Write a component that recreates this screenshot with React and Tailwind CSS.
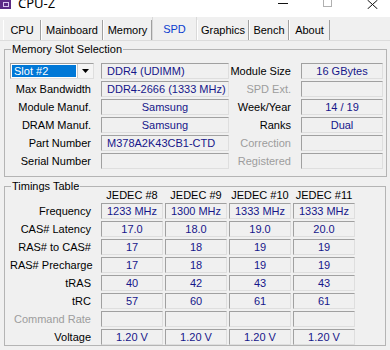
import React from "react";

const Box = ({ children, className = "" }) => (
    <div className={`h-4 flex items-center justify-center border border-t-[#a0a0a0] border-l-[#a0a0a0] border-b-[#dedede] border-r-[#dedede] text-[#16168a] leading-none whitespace-nowrap ${className}`}>
        {children}
    </div>
);

const Label = ({ children, dim, className = "" }) => (
    <div className={`text-right whitespace-nowrap leading-none ${dim ? "text-[#9d9d9d]" : "text-black"} ${className}`}>
        {children}
    </div>
);

const slotRows = [
    { label: "Max Bandwidth", value: "DDR4-2666 (1333 MHz)", left: true, rlabel: "SPD Ext.", rdim: true, rvalue: "" },
    { label: "Module Manuf.", value: "Samsung", rlabel: "Week/Year", rvalue: "14 / 19" },
    { label: "DRAM Manuf.", value: "Samsung", rlabel: "Ranks", rvalue: "Dual" },
    { label: "Part Number", value: "M378A2K43CB1-CTD", left: true, rlabel: "Correction", rdim: true, rvalue: "" },
    { label: "Serial Number", value: "", rlabel: "Registered", rdim: true, rvalue: "" },
];

const timings = [
    { label: "Frequency", values: ["1233 MHz", "1300 MHz", "1333 MHz", "1333 MHz"] },
    { label: "CAS# Latency", values: ["17.0", "18.0", "19.0", "20.0"] },
    { label: "RAS# to CAS#", values: ["17", "18", "19", "19"] },
    { label: "RAS# Precharge", values: ["17", "18", "19", "19"] },
    { label: "tRAS", values: ["40", "42", "43", "43"] },
    { label: "tRC", values: ["57", "60", "61", "61"] },
    { label: "Command Rate", dim: true, values: ["", "", "", ""] },
    { label: "Voltage", values: ["1.20 V", "1.20 V", "1.20 V", "1.20 V"] },
];

const tabs = [
    { name: "CPU", w: "w-[38px]" },
    { name: "Mainboard", w: "w-[62px]" },
    { name: "Memory", w: "w-[49px]" },
    { name: "SPD", w: "w-[45px]", active: true },
    { name: "Graphics", w: "w-[52px]" },
    { name: "Bench", w: "w-[40px]" },
    { name: "About", w: "w-[41px]" },
];

const App = () => {
    return (
        <div className="w-[390px] h-[350px] overflow-hidden bg-[#f0f0f0] text-[11px] font-['Liberation_Sans',Arial,sans-serif] text-black">
            {/* title bar, cropped at the top */}
            <div className="h-[17px] bg-white flex items-start">
                <div className="w-[11px] h-[9px] shrink-0 bg-[#5b2a86] flex items-center justify-center">
                    <div className="w-[6px] h-[5px] border border-[#d9c6ef]"></div>
                </div>
                <div className="ml-[7px] -mt-[3px] text-[13px] leading-none font-['Noto_Sans',sans-serif] text-black">CPU-Z</div>
                <div className="ml-auto mr-[12px] flex items-start gap-[35px] h-[12px]">
                    <span className="block w-[10px] h-px mt-[3px] bg-[#111111]"></span>
                    <span className="block w-[9px] h-[7px] border border-[#b0b0b0] border-t-0"></span>
                    <svg width="11" height="9" viewBox="0 0 11 9" className="shrink-0">
                        <path d="M0.5 0 L10.5 9 M10.5 0 L0.5 9" stroke="#111111" strokeWidth="1" fill="none" />
                    </svg>
                </div>
            </div>

            {/* tabs */}
            <div className="h-[23px] flex items-end pl-[3px]">
                {tabs.map((t) => (
                    <div
                        key={t.name}
                        className={`${t.w} flex items-center justify-center leading-none ${t.active ? "h-[23px] text-[#0a3ccf] bg-[#f0f0f0] border-x border-x-[#d9d9d9] pt-[1px]" : "h-[20px] pt-[1px] border-l border-r border-l-white border-r-[#a0a0a0]"}`}
                    >
                        {t.name}
                    </div>
                ))}
            </div>

            {/* panel */}
            <div className="border-t border-t-[#dcdcdc] px-[4px] pt-[3px]">
                <fieldset className="border border-[#b4b4b4] pl-[5px] pr-[3px] pt-[8px] h-[133px]">
                    <legend className="ml-[1px] px-[1px] leading-none">Memory Slot Selection</legend>
                    <div className="flex flex-col gap-[2px]">
                        <div className="flex items-center h-4">
                            <div className="w-[84px] h-4 flex border border-t-[#a0a0a0] border-l-[#a0a0a0] border-b-[#dedede] border-r-[#dedede] bg-white">
                                <div className="flex-1 bg-[#0078d7] text-white leading-none flex items-center pl-[2px] m-[1px]">Slot #2</div>
                                <div className="w-[16px] flex items-center justify-center border-l border-[#c8c8c8] bg-[#f4f4f4]">
                                    <svg width="7" height="4" viewBox="0 0 7 4"><path d="M0 0 H7 L3.5 4 Z" fill="#000" /></svg>
                                </div>
                            </div>
                            <Box className="ml-[7px] w-[128px] !justify-start pl-[5px]">DDR4 (UDIMM)</Box>
                            <Label className="w-[62px]">Module Size</Label>
                            <Box className="ml-[10px] w-[82px]">16 GBytes</Box>
                        </div>
                        {slotRows.map((r) => (
                            <div key={r.label} className="flex items-center h-4">
                                <Label className="w-[81px]">{r.label}</Label>
                                <Box className={`ml-[10px] w-[128px] ${r.left ? "!justify-start pl-[5px]" : ""}`}>{r.value}</Box>
                                <Label dim={r.rdim} className="w-[62px]">{r.rlabel}</Label>
                                <Box className="ml-[10px] w-[82px]">{r.rvalue}</Box>
                            </div>
                        ))}
                    </div>
                </fieldset>

                <fieldset className="mt-[4px] border border-[#b4b4b4] pl-[5px] pr-[3px] h-[165px]">
                    <legend className="ml-[1px] px-[1px] leading-none">Timings Table</legend>
                    <div className="flex h-[14px] items-center -mt-[4px]">
                        <div className="w-[91px]"></div>
                        {["JEDEC #8", "JEDEC #9", "JEDEC #10", "JEDEC #11"].map((h) => (
                            <div key={h} className="w-[62px] mr-[2px] text-center leading-none whitespace-nowrap">{h}</div>
                        ))}
                    </div>
                    <div className="flex flex-col gap-[2px] mt-[1px]">
                        {timings.map((r) => (
                            <div key={r.label} className="flex items-center h-4">
                                <Label dim={r.dim} className="w-[81px]">{r.label}</Label>
                                <div className="ml-[10px] flex gap-[2px]">
                                    {r.values.map((v, i) => (
                                        <Box key={i} className="w-[62px]">{v}</Box>
                                    ))}
                                </div>
                            </div>
                        ))}
                    </div>
                </fieldset>
            </div>
        </div>
    );
};

export default App;
